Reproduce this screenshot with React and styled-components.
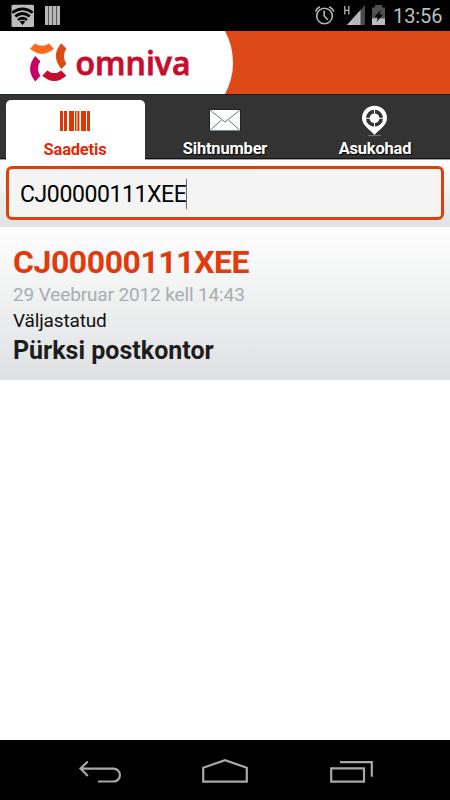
import React from "react";
import styled, { createGlobalStyle } from "styled-components";

const GlobalStyle = createGlobalStyle`
  * { box-sizing: border-box; }
  body { margin: 0; background: #fff; font-family: Roboto, "Liberation Sans", sans-serif; }
  svg { display: block; flex: none; }
`;

const Screen = styled.div`
  width: 450px;
  height: 800px;
  display: flex;
  flex-direction: column;
  background: #fff;
  overflow: hidden;
`;

const StatusBar = styled.div`
  height: 31px;
  flex: none;
  display: flex;
  justify-content: space-between;
  background: #000;
`;

const Clock = styled.div`
  width: 58px;
  padding-left: 1px;
  font-size: 20px;
  line-height: 33px;
  letter-spacing: -0.1px;
  color: #bebebe;
`;

const StatusGroup = styled.div`
  display: flex;
`;

const Header = styled.header`
  height: 63px;
  flex: none;
  background: #dd4a18;
`;

const Brand = styled.div`
  width: 233px;
  height: 63px;
  background: #fff;
  clip-path: path("M0 0H225A66 66 0 0 1 225 63H0Z");
`;

const Tabs = styled.nav`
  height: 66px;
  flex: none;
  display: grid;
  grid-template-columns: repeat(3, 150px);
  background: #333;
  border-top: 1px solid #152426;
  border-bottom: 1px solid #a0a0a0;
  box-shadow: inset 0 -1px #111;
`;

const Tab = styled.div`
  display: flex;
  flex-direction: column;
  align-items: center;
  margin: ${(p) => (p.$active ? "5px 5.5px -1px" : "5px 0 0")};
  border-radius: 5px 5px 0 0;
  background: ${(p) => (p.$active ? "#fff" : "transparent")};
  color: ${(p) => (p.$active ? "#e02b08" : "#fff")};
  text-shadow: ${(p) => (p.$active ? "none" : "1px 1px 1px #000")};
`;

const TabLabel = styled.span`
  margin-top: ${(p) => (p.$active ? "6px" : "1px")};
  font-size: 16.5px;
  line-height: 20px;
  font-weight: 700;
  letter-spacing: -0.2px;
`;

const Search = styled.div`
  height: 67px;
  flex: none;
  padding: 6px 6px 7px;
  background: linear-gradient(#fff, #dfe1e2);
`;

const Field = styled.div`
  height: 54px;
  display: flex;
  align-items: center;
  padding: 3px 0 0 11px;
  border: 3px solid #dd400b;
  border-radius: 6px;
  background: #f4f4f4;
  color: #000;
  font-size: 23px;
  letter-spacing: -0.4px;
`;

const Caret = styled.i`
  width: 1px;
  height: 30px;
  margin-top: -1px;
  background: #666;
`;

const Card = styled.section`
  height: 153px;
  flex: none;
  padding: 17px 13px 0;
  background: linear-gradient(#fefefe, #f0f1f1 45%, #dfe0e2);
`;

const Line = styled.div`
  white-space: nowrap;
  font-size: ${(p) => p.$size}px;
  line-height: ${(p) => p.$height}px;
  font-weight: ${(p) => (p.$bold ? 700 : 400)};
  color: ${(p) => p.$color};
  letter-spacing: ${(p) => p.$spacing || 0}px;
`;

const NavBar = styled.footer`
  height: 60px;
  margin-top: auto;
  flex: none;
  background: #000;
`;

const LeftStatus = () => (
  <svg width="80" height="31" viewBox="0 0 80 31">
    <rect x="11.5" y="4.7" width="22.5" height="22.3" rx="1.5" fill="#bcbcbc" />
    <g fill="none" stroke="#000" strokeWidth="2.7">
      <path d="M12.3 12.7Q22.5 5 32.7 12.7" />
      <path d="M15.2 16.4Q22.5 10.6 29.8 16.4" />
      <path d="M18 20Q22.5 16.5 27 20" />
    </g>
    <path d="M19.8 21.7Q22.5 19.7 25.2 21.7L22.5 25Z" fill="#000" />
    <path d="M45 6h15v19h-15z" fill="#b7b7b7" />
    <path d="M48.5 6v19M52.5 6v19M56.5 6v19" stroke="#555" strokeWidth="1" />
  </svg>
);

const RightStatus = () => (
  <svg width="80" height="31" viewBox="312 0 80 31">
    <g fill="none" stroke="#b5b5b5" strokeWidth="1.6">
      <circle cx="324.5" cy="16" r="7.8" />
      <path d="M324.2 10.8V16l3.6 3.8" />
      <path d="M315.6 11.6Q316.5 8 320 6.9M329 6.9Q332.8 8 333.7 11.6" />
      <path d="M344.8 6v8.5M348.8 6v8.5M345 10.3h4" strokeWidth="1.3" />
    </g>
    <path d="M365 5V25H347Z" fill="#4a4a4a" />
    <path d="M360.5 10V25H347Z" fill="#bdbdbd" />
    <path d="M354 17v8M357 14v11" stroke="#999" strokeWidth="0.7" />
    <path d="M375 5h7v2.5h3V18.5h-13V7.5h3z" fill="#505050" />
    <path d="M372 18.3h13V25h-13z" fill="#bdbdbd" />
    <path d="M381.2 9.5 374.6 16.7 378 17.4 376.6 22 382.8 14.8 379.2 14.2Z" fill="#000" />
  </svg>
);

const Logo = () => (
  <svg width="225" height="63" viewBox="0 31 225 63">
    <path fill="#ff681d" d="M35 43.4Q42 48 49 43.4L54 48.8Q42 59 30 48.8Z" />
    <path fill="#dc4b14" d="M61.3 43.3L66.3 48.5Q61.7 56 66.3 64L61.3 69Q50.5 56 61.3 43.3Z" />
    <path fill="#c80064" d="M35.2 56L40.3 61.2Q35.7 68.5 40.3 76L35.2 81.4Q25 69 35.2 56Z" />
    <path fill="#c60d2d" d="M47.3 70.4Q54.3 75.8 61.3 70.4L66.3 75.8Q54.3 86.2 42.3 75.8Z" />
    <text x="75.5" y="75.3" fontFamily='"Open Sans", sans-serif' fontSize="33" fontWeight="600" fill="#c60d2d" stroke="#c60d2d" strokeWidth="0.8" textLength="115" lengthAdjust="spacingAndGlyphs">omniva</text>
  </svg>
);

const BarcodeIcon = () => (
  <svg width="36" height="34" viewBox="57 100 36 34">
    <path fill="#df3605" d="M60 111h3v20h-3zM64 111h3v20h-3zM69 111h5v20h-5zM75 111h1.5v20h-1.5zM77.4 111h2v20h-2zM81 111h5v20h-5zM87 111h3v20h-3z" />
  </svg>
);

const MailIcon = () => (
  <svg width="36" height="38" viewBox="207 100 36 38">
    <rect x="209.5" y="109.5" width="31" height="21.5" rx="1" fill="#111" />
    <rect x="210" y="110" width="30" height="20.5" rx="1" fill="#fff" />
    <path d="M210.5 110.5 225 122 239.5 110.5M210.5 130l11-10M239.5 130l-11-10" fill="none" stroke="#66777d" strokeWidth="1" />
    <path d="M210 130.5h30" stroke="#75858a" />
  </svg>
);

const PinIcon = () => (
  <svg width="36" height="38" viewBox="357 100 36 38">
    <path d="M374.5 105.8c7 0 12.5 5.4 12.5 12.2 0 7.4-7.2 11-12.5 17-5.3-6-12.5-9.6-12.5-17 0-6.8 5.5-12.2 12.5-12.2z" fill="#fff" />
    <circle cx="374.5" cy="118.3" r="6.7" fill="none" stroke="#333" strokeWidth="3.6" />
    <path d="M374.5 109v4.5M374.5 122.5v4.5M365.5 118.3h4.5M379 118.3h4.5" stroke="#fff" strokeWidth="1" />
    <path d="M368 135.6h13" stroke="#777" strokeWidth="1" />
  </svg>
);

const NavIcons = () => (
  <svg width="450" height="60" viewBox="0 740 450 60" fill="none" stroke="#a8a8a8" strokeWidth="2.2">
    <path d="M87.8 761.5 80.5 768.6 87.8 776M80.5 768.6H113.5A6.4 6.4 0 0 1 113.5 781.5H98" />
    <path d="M203.2 767.7 225 760.2 246.8 767.7V781.7H203.2Z" />
    <path d="M331.2 768.4H364V781.7H331.2ZM340 762.2H371.8V776.8" />
  </svg>
);

export default function App() {
  return (
    <Screen>
      <GlobalStyle />
      <StatusBar>
        <LeftStatus />
        <StatusGroup>
          <RightStatus />
          <Clock>13:56</Clock>
        </StatusGroup>
      </StatusBar>
      <Header>
        <Brand><Logo /></Brand>
      </Header>
      <Tabs>
        <Tab $active>
          <BarcodeIcon />
          <TabLabel $active>Saadetis</TabLabel>
        </Tab>
        <Tab>
          <MailIcon />
          <TabLabel>Sihtnumber</TabLabel>
        </Tab>
        <Tab>
          <PinIcon />
          <TabLabel>Asukohad</TabLabel>
        </Tab>
      </Tabs>
      <Search>
        <Field>CJ00000111XEE<Caret /></Field>
      </Search>
      <Card>
        <Line $size={32} $height={37} $spacing={-0.45} $bold $color="#e13b0b">CJ00000111XEE</Line>
        <Line $size={19} $height={28} $spacing={-0.13} $color="#a9adb0">29 Veebruar 2012 kell 14:43</Line>
        <Line $size={19} $height={23} $spacing={-0.15} $color="#111">Väljastatud</Line>
        <Line $size={25} $height={37} $bold $color="#1d1d1d">Pürksi postkontor</Line>
      </Card>
      <NavBar><NavIcons /></NavBar>
    </Screen>
  );
}
